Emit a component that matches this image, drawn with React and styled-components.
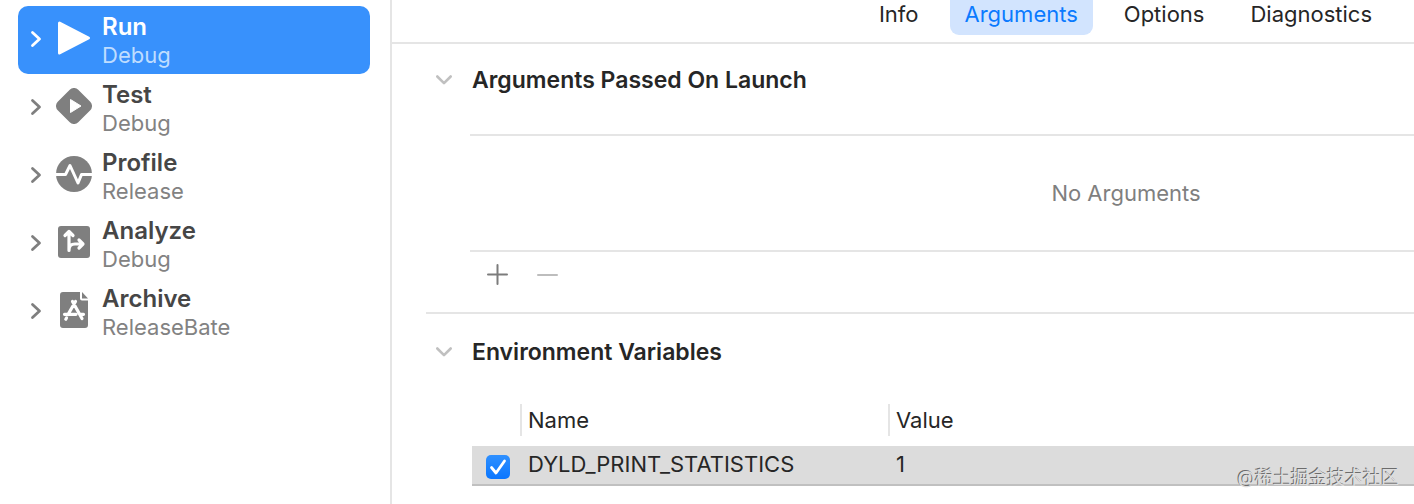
import React, { useState } from 'react'
import styled, { createGlobalStyle } from 'styled-components';

const actions = [
    { name: 'Run', config: 'Debug', icon: <RunIcon /> },
    { name: 'Test', config: 'Debug', icon: <TestIcon /> },
    { name: 'Profile', config: 'Release', icon: <ProfileIcon /> },
    { name: 'Analyze', config: 'Debug', icon: <AnalyzeIcon /> },
    { name: 'Archive', config: 'ReleaseBate', icon: <ArchiveIcon /> },
];

const tabs = ['Info', 'Arguments', 'Options', 'Diagnostics'];

function App() {
    const [action, setAction] = useState('Run');
    const [tab, setTab] = useState('Arguments');
    const [enabled, setEnabled] = useState(true);

    return (
        <SchemeEditorStyled>
            <GlobalStyle />
            <Sidebar>
                {actions.map((item) => (
                    <ActionButton
                        key={item.name}
                        type="button"
                        $active={item.name === action}
                        onClick={() => setAction(item.name)}
                    >
                        <ChevronRight />
                        {item.icon}
                        <span className="labels">
                            <span className="name">{item.name}</span>
                            <span className="config">{item.config}</span>
                        </span>
                    </ActionButton>
                ))}
            </Sidebar>
            <Content>
                <TabBar>
                    {tabs.map((name) => (
                        <Tab key={name} type="button" $active={name === tab} onClick={() => setTab(name)}>
                            {name}
                        </Tab>
                    ))}
                </TabBar>
                <Section>
                    <SectionTitle>
                        <button type="button"><ChevronDown />Arguments Passed On Launch</button>
                    </SectionTitle>
                    <EmptyList>No Arguments</EmptyList>
                    <ListActions>
                        <button type="button" aria-label="Add argument">
                            <svg width="22" height="22" viewBox="0 0 22 22" stroke="#7c7c7c">
                                <path d="M11.5 1v19M2 10.5h19" />
                            </svg>
                        </button>
                        <button type="button" aria-label="Remove argument" disabled>
                            <svg width="22" height="22" viewBox="0 0 22 22" stroke="#bdbdbd">
                                <path d="M2 11h19" />
                            </svg>
                        </button>
                    </ListActions>
                </Section>
                <Section>
                    <SectionTitle>
                        <button type="button"><ChevronDown />Environment Variables</button>
                    </SectionTitle>
                    <VariableTable>
                        <colgroup>
                            <col className="check-col" />
                            <col className="name-col" />
                            <col />
                        </colgroup>
                        <thead>
                            <tr>
                                <td></td>
                                <th scope="col"><span>Name</span></th>
                                <th scope="col"><span>Value</span></th>
                            </tr>
                        </thead>
                        <tbody>
                            <tr>
                                <td>
                                    <Checkbox
                                        id="dyld"
                                        type="checkbox"
                                        checked={enabled}
                                        onChange={(e) => setEnabled(e.target.checked)}
                                    />
                                </td>
                                <td><label htmlFor="dyld">DYLD_PRINT_STATISTICS</label></td>
                                <td>1</td>
                            </tr>
                        </tbody>
                    </VariableTable>
                </Section>
            </Content>
            <Watermark>@稀土掘金技术社区</Watermark>
        </SchemeEditorStyled>
    )
}

function ChevronRight() {
    return (
        <svg className="chevron" width="12" height="18" viewBox="0 0 12 18" fill="none" stroke="currentColor" strokeWidth="2.8" strokeLinecap="round" strokeLinejoin="round">
            <path d="M2.500 2.500L9.500 9l-7 6.500" />
        </svg>
    )
}

function ChevronDown() {
    return (
        <svg width="18" height="12" viewBox="0 0 18 12" fill="none" stroke="#c0c0c0" strokeWidth="2.6" strokeLinecap="round" strokeLinejoin="round">
            <path d="M2.300 2.500L9 9.200l6.700-6.700" />
        </svg>
    )
}

function RunIcon() {
    return (
        <svg className="icon" width="36" height="36" viewBox="0 0 36 36" fill="currentColor" stroke="currentColor" strokeWidth="3" strokeLinejoin="round">
            <path d="M3.500 3L32.500 18 3.500 33z" />
        </svg>
    )
}

function TestIcon() {
    return (
        <svg className="icon" width="36" height="36" viewBox="0 0 36 36">
            <rect x="3.5" y="3.5" width="29" height="29" rx="6" transform="rotate(45 18 18)" fill="currentColor" />
            <path d="M14.500 11.500L25 18l-10.500 6.500z" fill="#fff" stroke="#fff" strokeWidth="1" strokeLinejoin="round" />
        </svg>
    )
}

function ProfileIcon() {
    return (
        <svg className="icon" width="36" height="36" viewBox="0 0 36 36" fill="none">
            <circle cx="18" cy="18" r="18" fill="currentColor" />
            <path d="M0 18.500h9.500l4.500-9 8 17.500 3.500-8.500H36" stroke="#fff" strokeWidth="3" strokeLinejoin="round" />
        </svg>
    )
}

function AnalyzeIcon() {
    return (
        <svg className="icon" width="36" height="36" viewBox="0 0 36 36" fill="none" stroke="#fff" strokeWidth="3.2" strokeLinecap="round" strokeLinejoin="round">
            <rect x="2" y="2" width="32" height="32" rx="3" fill="currentColor" stroke="none" />
            <path d="M13 26.500V8M9 11.500L13 7.500l4 4M13 26c0-4.500 2-6 6-6h7M23 16l4 4-4 4" />
        </svg>
    )
}

function ArchiveIcon() {
    return (
        <svg className="icon" width="36" height="36" viewBox="0 0 36 36" fill="none">
            <path d="M7 0h17v6.500a2 2 0 0 0 2 2h6V33a3 3 0 0 1-3 3H7a3 3 0 0 1-3-3V3a3 3 0 0 1 3-3z" fill="currentColor" />
            <path d="M26 0l6 6.500h-6z" fill="currentColor" />
            <path d="M16.500 9.500l9.500 17M19.500 9.500L12 22.500M8.500 22.300h11.500M24.500 22.300h3M10.500 26l-.7 1.200" stroke="#fff" strokeWidth="3.2" strokeLinecap="round" />
        </svg>
    )
}

const GlobalStyle = createGlobalStyle`
    *{
        box-sizing: border-box;
        margin: 0;
        padding: 0;
    }
    body{
        background: #fff;
        color: #262626;
        font-family: Inter, "Liberation Sans", "Noto Sans CJK SC", sans-serif;
        font-size: 22px;
        line-height: 28px;
    }
    button{
        border: none;
        background: none;
        color: inherit;
        font: inherit;
        cursor: pointer;
    }
    svg{
        display: block;
        flex-shrink: 0;
    }
`;

const SchemeEditorStyled = styled.div`
    position: relative;
    display: flex;
    min-height: 100vh;
`;

const Sidebar = styled.nav`
    flex: 0 0 392px;
    padding: 6px 20px 0 18px;
    border-right: 2px solid #e5e5e5;
`;

const ActionButton = styled.button`
    display: flex;
    align-items: center;
    width: 100%;
    height: 68px;
    padding-left: 12px;
    border-radius: 10px;
    text-align: left;
    background: ${({ $active }) => ($active ? '#3891fc' : 'transparent')};
    color: ${({ $active }) => ($active ? '#fff' : '#7f7f7f')};
    .chevron{
        margin-bottom: 2px;
    }
    .icon{
        margin: 0 10px 4px 14px;
    }
    .labels{
        display: flex;
        flex-direction: column;
        padding-top: 2px;
    }
    .name{
        font-size: 24px;
        font-weight: 600;
        color: ${({ $active }) => ($active ? '#fff' : '#464646')};
    }
    .config{
        color: ${({ $active }) => ($active ? '#bfddff' : '#828282')};
    }
`;

const Content = styled.main`
    flex: 1;
    min-width: 0;
`;

const TabBar = styled.header`
    display: flex;
    justify-content: flex-end;
    align-items: flex-start;
    gap: 16px;
    height: 44px;
    padding-right: 27px;
    border-bottom: 2px solid #e5e5e5;
`;

const Tab = styled.button`
    padding: 0 15px 7px;
    border-radius: 0 0 9px 9px;
    background: ${({ $active }) => ($active ? '#d2e4fe' : 'transparent')};
    color: ${({ $active }) => ($active ? '#0a7aff' : '#262626')};
`;

const Section = styled.section`
    margin-left: 34px;
    padding-top: 22px;
    & + &{
        padding-top: 24px;
        border-top: 2px solid #e5e5e5;
    }
`;

const SectionTitle = styled.h2`
    font-size: 23px;
    font-weight: 600;
    button{
        display: flex;
        align-items: center;
        gap: 19px;
        padding-left: 9px;
    }
`;

const EmptyList = styled.div`
    display: flex;
    align-items: center;
    justify-content: center;
    height: 118px;
    margin: 40px 0 0 44px;
    padding-left: 368px;
    border-top: 2px solid #e5e5e5;
    border-bottom: 2px solid #e5e5e5;
    color: #7f7f7f;
`;

const ListActions = styled.div`
    display: flex;
    gap: 28px;
    padding: 12px 0 26px 60px;
    svg{
        stroke-width: 2;
        stroke-linecap: round;
    }
`;

const VariableTable = styled.table`
    width: calc(100% - 46px);
    margin: 38px 0 0 46px;
    border-collapse: collapse;
    table-layout: fixed;
    .check-col{
        width: 48px;
    }
    .name-col{
        width: 368px;
    }
    thead tr{
        height: 42px;
    }
    th{
        font-weight: 400;
        text-align: left;
        vertical-align: top;
        span{
            display: block;
            padding: 2px 0 2px 6px;
            border-left: 2px solid #e5e5e5;
        }
    }
    tbody tr{
        height: 40px;
        background: #dcdcdc;
        box-shadow: inset 0 -2px #c0c0c0;
    }
    tbody td{
        padding: 0 0 4px 8px;
        vertical-align: middle;
    }
    tbody td:first-child{
        padding: 2px 0 0 14px;
    }
`;

const Checkbox = styled.input`
    display: block;
    appearance: none;
    width: 24px;
    height: 24px;
    border-radius: 5px;
    background: #fff;
    &:checked{
        background: url("data:image/svg+xml,%3Csvg xmlns='http://www.w3.org/2000/svg' viewBox='0 0 24 24' fill='none' stroke='white' stroke-width='2.8' stroke-linecap='round' stroke-linejoin='round'%3E%3Cpath d='M5.500 12.500l4.500 5.500 8.500-12'/%3E%3C/svg%3E"), linear-gradient(#2f90ff, #0a76ff);
    }
`;

const Watermark = styled.div`
    position: absolute;
    right: 15px;
    bottom: 12px;
    font-size: 18px;
    line-height: 28px;
    color: #dedede;
    text-shadow: -1px -1px 0 #6c6c6c;
`;

export default App;
